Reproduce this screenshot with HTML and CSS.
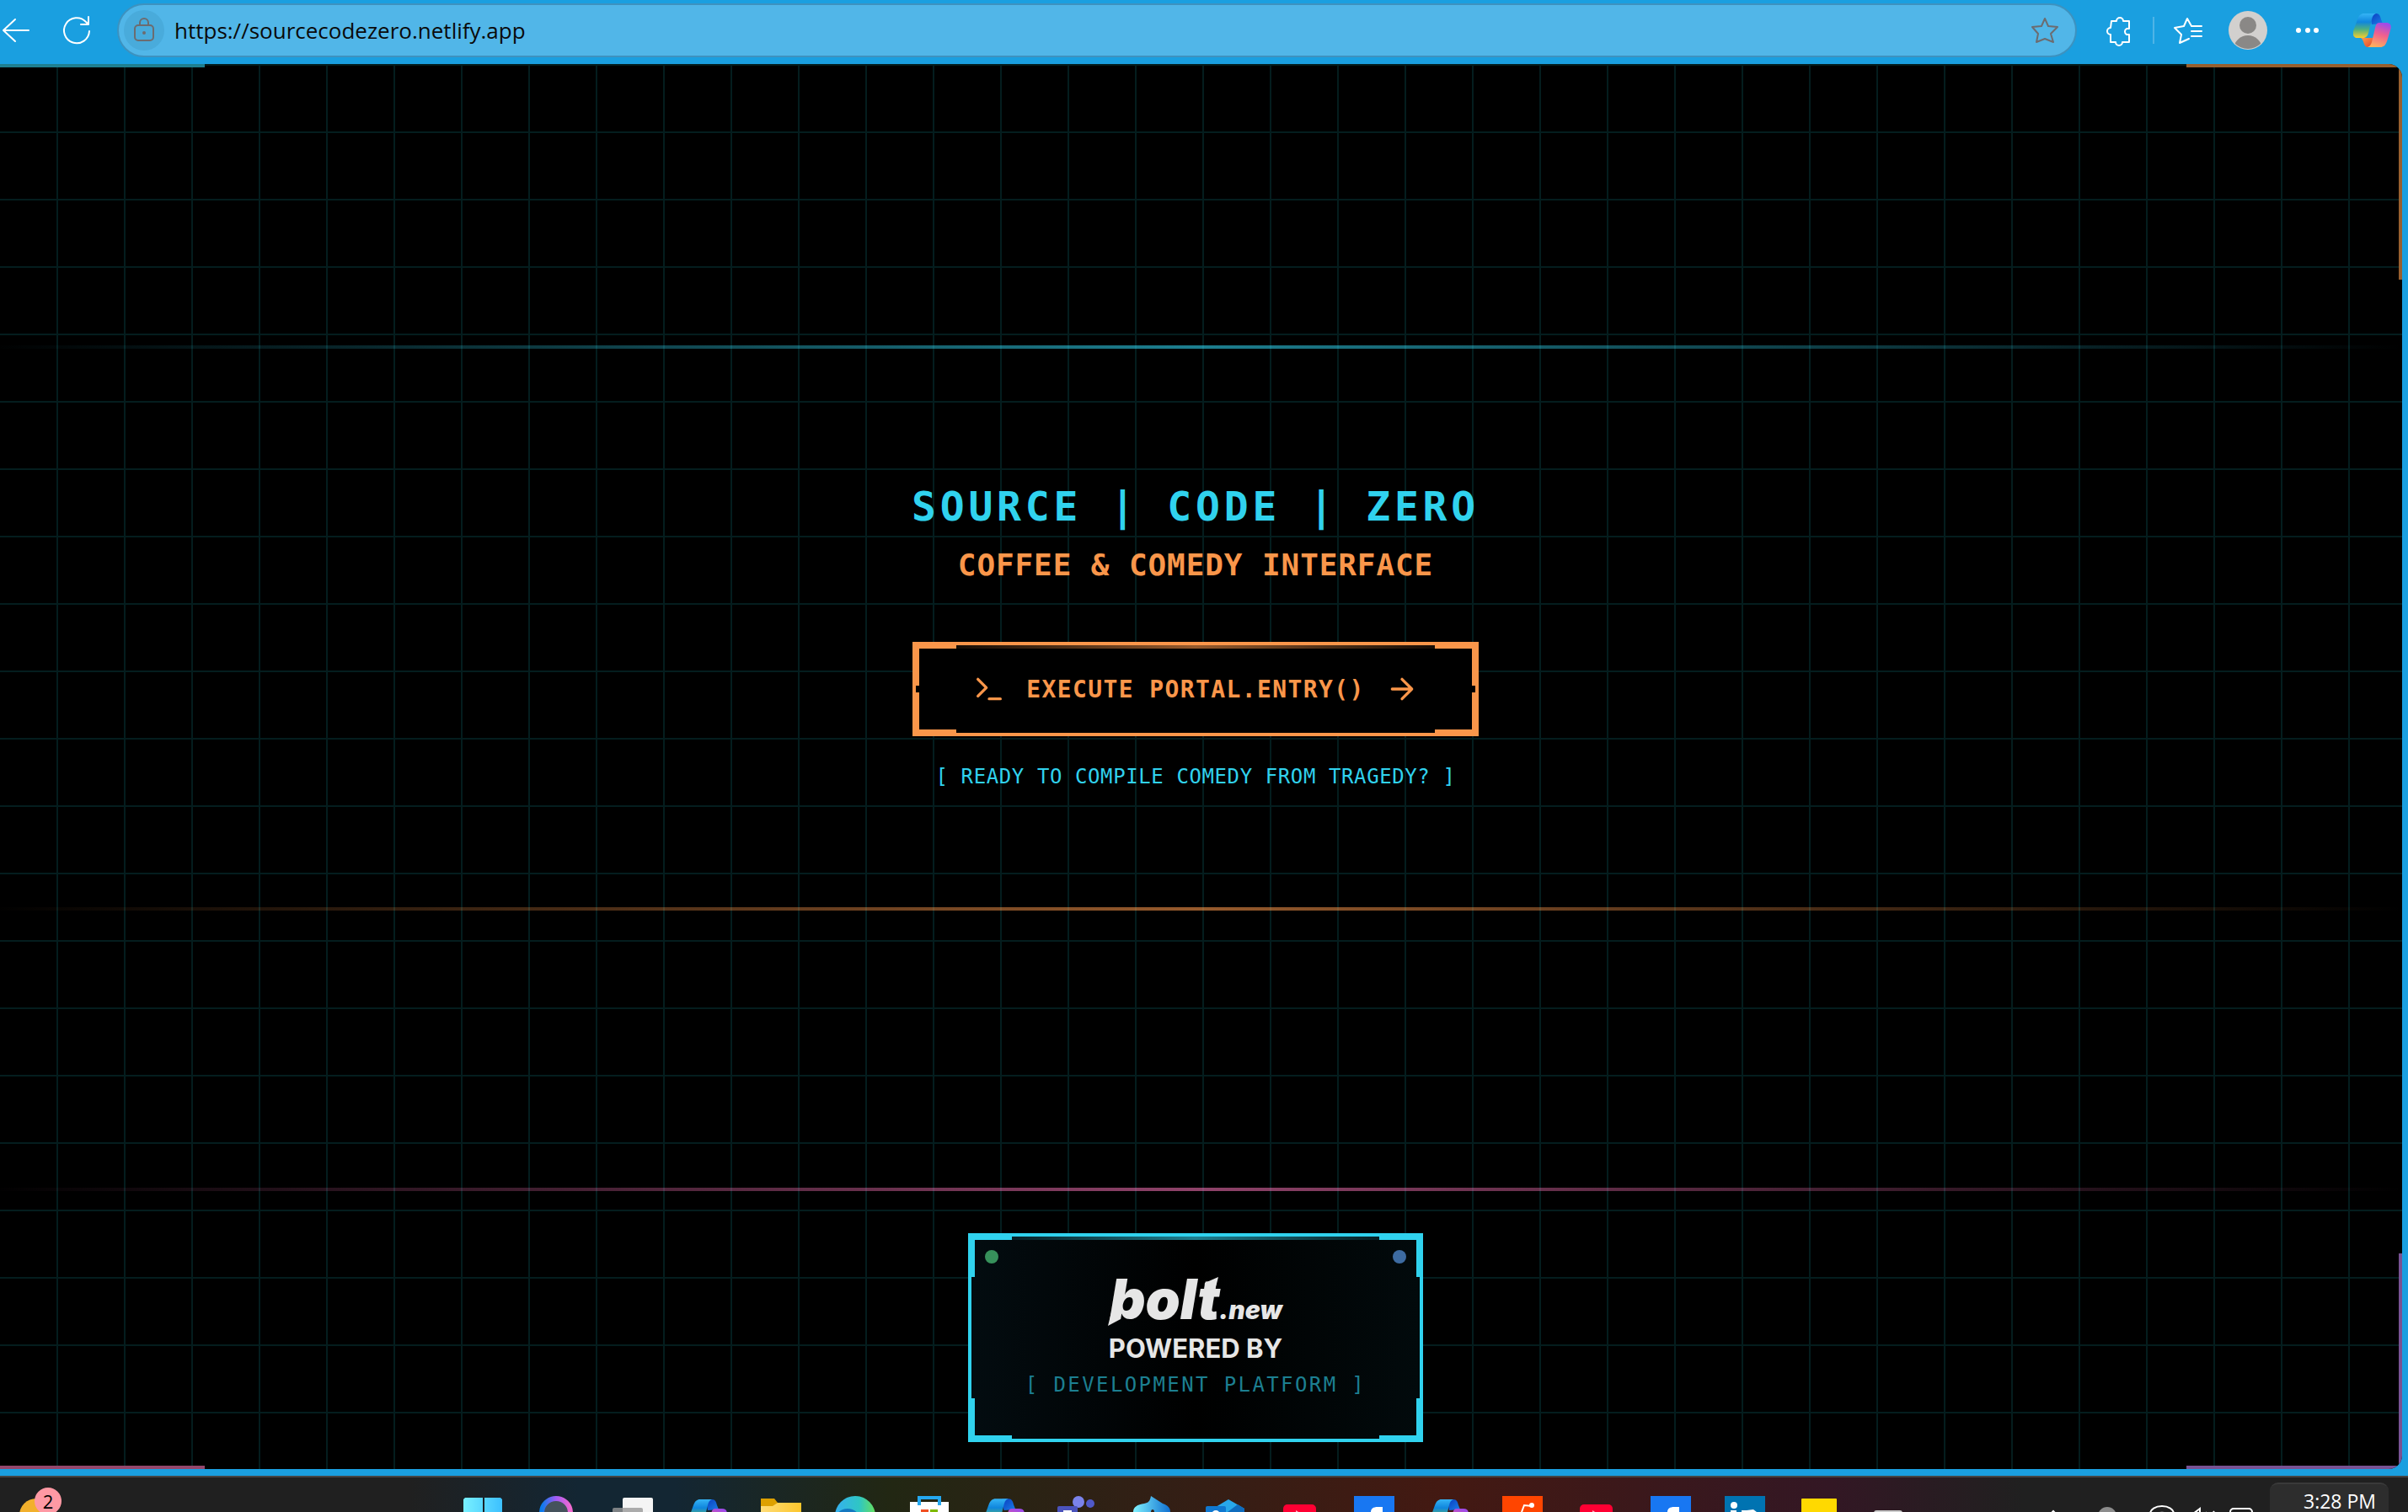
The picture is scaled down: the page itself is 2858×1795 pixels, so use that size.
FILE: index.html
```html
<!DOCTYPE html>
<html lang="en">
<head>
<meta charset="utf-8">
<title>Source Code Zero</title>
<link rel="stylesheet" href="styles.css">
</head>
<body>
<svg class="defs" aria-hidden="true">
  <defs>
    <linearGradient id="cp-left" x1="0" y1="0" x2="0" y2="1"><stop offset="0" stop-color="#35b4f5"/><stop offset=".35" stop-color="#0f86dd"/><stop offset=".65" stop-color="#4fb07f"/><stop offset="1" stop-color="#f8cf2c"/></linearGradient>
    <linearGradient id="cp-right" x1=".6" y1="0" x2=".3" y2="1"><stop offset="0" stop-color="#a04be8"/><stop offset=".45" stop-color="#f0608e"/><stop offset="1" stop-color="#ffb25c"/></linearGradient>
    <linearGradient id="cp-fold" x1="0" y1="0" x2="1" y2="1"><stop offset="0" stop-color="#0a3ec0"/><stop offset="1" stop-color="#1a7ee8"/></linearGradient>
    <linearGradient id="cp-foot" x1="0" y1="0" x2="1" y2="1"><stop offset="0" stop-color="#ff9a4a"/><stop offset="1" stop-color="#e0452f"/></linearGradient>
    <linearGradient id="win" x1="0" y1="0" x2="1" y2="0"><stop offset="0" stop-color="#78f0ff"/><stop offset="1" stop-color="#3cc0ff"/></linearGradient>
    <linearGradient id="ring" x1="0" y1="0" x2="1" y2="0"><stop offset="0" stop-color="#0a7bea"/><stop offset=".5" stop-color="#a25bf5"/><stop offset="1" stop-color="#f06ad0"/></linearGradient>
    <linearGradient id="folder" x1="0" y1="0" x2="1" y2="0"><stop offset="0" stop-color="#ffdc78"/><stop offset="1" stop-color="#fcc62c"/></linearGradient>
    <linearGradient id="edge" x1="0" y1="0" x2="1" y2="0"><stop offset="0" stop-color="#35b0f0"/><stop offset=".6" stop-color="#2fc6c4"/><stop offset="1" stop-color="#66e05e"/></linearGradient>
    <linearGradient id="hood" x1="0" y1="0" x2="1" y2="0"><stop offset="0" stop-color="#80f2ff"/><stop offset="1" stop-color="#0f6fd0"/></linearGradient>
    <symbol id="copilot" viewBox="0 0 45 40">
      <path d="M20 0h7c4 0 5 3 6 7l2 5-13 1z" fill="url(#cp-fold)"/>
      <path d="M10 29h14l-1 8c-1 2-3 3-6 3-5 0-4-9-8-11z" fill="url(#cp-foot)"/>
      <path d="M13 0h14c-3 1-4 3-5 7l-4 16c-1 4-3 6-7 6H5c-4 0-6-3-5-8L5 7c2-5 4-7 8-7z" fill="url(#cp-left)"/>
      <path d="M31 11h8c5 0 7 3 5 9l-4 13c-2 5-4 7-8 7H17c3-1 4-3 5-6l4-17c1-4 2-6 5-6z" fill="url(#cp-right)"/>
    </symbol>
    <symbol id="facebook" viewBox="0 0 88 41">
      <path d="M22 22h48v19H22z" fill="#1877f2"/><path d="M56 35v6H42c0-4 3-6 8-6z" fill="#fff"/>
    </symbol>
    <symbol id="youtube" viewBox="0 0 88 41">
      <rect x="26" y="32" width="39" height="20" rx="5" fill="#ff0033"/><path d="M41 39l8 5h-8z" fill="#fff" opacity=".7"/>
    </symbol>
  </defs>
</svg>

<header class="toolbar">
  <button class="tool" aria-label="Back"><svg width="40" height="40" viewBox="0 0 40 40"><path d="M18 7L4 20l14 13M4 20h30"/></svg></button>
  <button class="tool" aria-label="Refresh"><svg width="40" height="40" viewBox="0 0 40 40"><path d="M35 21a15 15 0 1 1-4-11l3 3M34 4v9h-9"/></svg></button>
  <div class="address">
    <span class="lock"><svg width="40" height="40" viewBox="0 0 40 40"><rect x="9" y="14" width="22" height="18" rx="4"/><path d="M15 14v-3a5 5 0 0 1 10 0v3"/><circle cx="20" cy="23" r="1"/></svg></span>
    <input class="url" type="text" value="https://sourcecodezero.netlify.app" aria-label="Address">
    <svg class="star" width="40" height="40" viewBox="0 0 40 40"><path d="M20 6l4 9 11 1-8 8 3 10-10-4-10 4 2-10-7-8 11-1z"/></svg>
  </div>
  <nav class="tools" aria-label="Browser tools">
    <button class="tool" aria-label="Extensions"><svg width="40" height="40" viewBox="0 0 40 40"><path d="M11 9h6a4 4 0 0 1 8 0h7v9h-3a4 4 0 0 0 0 7h3v9h-8a4 4 0 0 1-8 0h-6v-9a4 4 0 0 1 0-8z"/></svg></button>
    <span class="divider"></span>
    <button class="tool" aria-label="Favorites"><svg width="40" height="40" viewBox="0 0 40 40"><path d="M36 15H24l-5-9-4 9-11 2 8 8-2 10 11-5M24 21h12M24 27h12"/></svg></button>
    <button class="tool" aria-label="Profile"><svg width="46" height="46" viewBox="0 0 46 46"><clipPath id="face"><circle cx="23" cy="23" r="22"/></clipPath><circle class="disc" cx="23" cy="23" r="23"/><g class="person" clip-path="url(#face)"><circle cx="23" cy="17" r="10"/><ellipse cx="23" cy="46" rx="17" ry="17"/></g></svg></button>
    <button class="tool" aria-label="More"><svg class="dots" width="40" height="40" viewBox="0 0 40 40"><circle cx="9" cy="20" r="3"/><circle cx="20" cy="20" r="3"/><circle cx="30" cy="20" r="3"/></svg></button>
    <button class="tool assistant" aria-label="Copilot"><svg class="plain" width="45" height="40"><use href="#copilot"/></svg></button>
  </nav>
</header>

<div class="window">
  <main class="page">
    <i class="edge edge-tl"></i><i class="edge edge-tr"></i><i class="edge edge-bl"></i><i class="edge edge-br"></i>
    <i class="scan scan-cyan"></i><i class="scan scan-orange"></i><i class="scan scan-pink"></i>

    <section class="hero">
      <h1>SOURCE | CODE | ZERO</h1>
      <h2>COFFEE &amp; COMEDY INTERFACE</h2>
      <button class="frame portal">
        <i class="corner tl"></i><i class="corner tr"></i><i class="corner bl"></i><i class="corner br"></i>
        <svg width="40" height="40" viewBox="0 0 24 24"><path d="M4 17l6-6-6-6M12 19h8"/></svg>
        <span>EXECUTE PORTAL.ENTRY()</span>
        <svg width="40" height="40" viewBox="0 0 24 24"><path d="M5 12h14M12 5l7 7-7 7"/></svg>
      </button>
      <p class="ready">[ READY TO COMPILE COMEDY FROM TRAGEDY? ]</p>
    </section>

    <a class="frame badge" href="#">
      <i class="corner tl"></i><i class="corner tr"></i><i class="corner bl"></i><i class="corner br"></i>
      <i class="dot dot-green"></i><i class="dot dot-blue"></i>
      <svg class="bolt" width="208" height="60" viewBox="0 0 208 60" role="img" aria-label="bolt.new">
        <path d="M4 42L0 58l15-8v-8z"/><path d="M115 7l16-7-4 16h-13z"/>
        <text class="bolt-name" x="2" y="50">bolt</text><text class="bolt-new" x="132" y="50">.new</text>
      </svg>
      <span class="powered">POWERED BY</span>
      <span class="platform">[ DEVELOPMENT PLATFORM ]</span>
    </a>
  </main>
</div>

<footer class="taskbar">
  <div class="widgets">
    <svg width="88" height="41" viewBox="0 0 88 41"><circle cx="43" cy="45" r="20" fill="#f2b02c"/><circle cx="57" cy="28" r="16" fill="#ff99a4"/></svg>
    <span class="count">2</span>
  </div>
  <nav class="apps" aria-label="Apps">
    <svg viewBox="0 0 88 41"><path d="M23 24h21v17H21V26zM46 24h19l2 2v15H46z" fill="url(#win)"/></svg>
    <svg viewBox="0 0 88 41"><circle cx="43" cy="42" r="17" fill="#45525c" stroke="url(#ring)" stroke-width="6"/></svg>
    <svg viewBox="0 0 88 41"><rect x="34" y="24" width="36" height="30" rx="2" fill="#f4f4f4"/><rect x="22" y="36" width="36" height="20" rx="2" fill="#999" opacity=".8"/></svg>
    <svg viewBox="0 0 88 41"><use href="#copilot" x="25" y="26" width="45" height="40"/></svg>
    <svg viewBox="0 0 88 41"><path d="M22 25h16l4 5v11H22z" fill="#dda000"/><path d="M22 34h14l6-4h28v11H22z" fill="url(#folder)"/></svg>
    <svg viewBox="0 0 88 41"><circle cx="46" cy="46" r="24" fill="url(#edge)"/><circle cx="37" cy="53" r="16" fill="#1478c0"/></svg>
    <svg viewBox="0 0 88 41"><path d="M23 29h46v12H23z" fill="#fff"/><path d="M34 33v-9h24v9" fill="none" stroke="#25a8f0" stroke-width="4"/><path d="M36 38h9v3h-9z" fill="#f25022"/><path d="M47 38h9v3h-9z" fill="#7fba00"/></svg>
    <svg viewBox="0 0 88 41"><use href="#copilot" x="23" y="25" width="48" height="43"/></svg>
    <svg viewBox="0 0 88 41"><circle cx="47" cy="29" r="7" fill="#7b83eb"/><circle cx="61" cy="31" r="5" fill="#5059c9"/><rect x="22" y="34" width="24" height="20" rx="2" fill="#4b53bc"/><path d="M29 39h10v2H29z" fill="#fff"/></svg>
    <svg viewBox="0 0 88 41"><path d="M24 41c0-6 5-9 13-10 6-1 7-4 8-9l14 9c6 2 9 5 9 10H49c0-4-4-4-4 0z" fill="url(#hood)"/></svg>
    <svg viewBox="0 0 88 41"><path d="M34 35l15-9 19 11v4H34z" fill="#28a8ea"/><path d="M48 41l12-9 8 5v4z" fill="#0f6cbd"/><rect x="22" y="34" width="24" height="20" rx="2" fill="#1078d0"/><circle cx="34" cy="44" r="5" fill="#fff"/></svg>
    <svg viewBox="0 0 88 41"><use href="#youtube"/></svg>
    <svg viewBox="0 0 88 41"><use href="#facebook"/></svg>
    <svg viewBox="0 0 88 41"><use href="#copilot" x="25" y="26" width="45" height="40"/></svg>
    <svg viewBox="0 0 88 41"><path d="M22 22h48v19H22z" fill="#ff4500"/><path d="M45 41l3-8 10 1" fill="none" stroke="#fff" stroke-width="2"/><circle cx="57" cy="33" r="3" fill="#fff"/></svg>
    <svg viewBox="0 0 88 41"><use href="#youtube"/></svg>
    <svg viewBox="0 0 88 41"><use href="#facebook"/></svg>
    <svg viewBox="0 0 88 41"><path d="M22 22h48v19H22z" fill="#0073b1"/><circle cx="33" cy="33" r="4" fill="#fff"/><path d="M29 39h7v2h-7zM42 39h6l8-1 4 3H42z" fill="#fff"/></svg>
    <svg viewBox="0 0 88 41"><rect x="25" y="25" width="42" height="30" rx="1" fill="#ffd900"/></svg>
    <svg viewBox="0 0 88 41"><rect x="23" y="39" width="34" height="20" rx="3" fill="#ccc"/></svg>
  </nav>
  <div class="tray">
    <svg width="252" height="41" viewBox="0 0 252 41"><path class="line" d="M8 45l5-5 5 5"/><circle cx="77" cy="46" r="11" fill="#8c8c8c"/><path class="line" d="M128 43a14 9 0 0 1 28 0M137 43a6 3 0 0 1 10 0M175 43h4l8-6v9M194 41l2 4M203 40l3 5"/><rect class="line" x="223" y="37" width="26" height="20" rx="4"/><path class="line" d="M228 42h5"/></svg>
    <button class="clock">3:28 PM</button>
  </div>
</footer>
</body>
</html>
```
FILE: styles.css
```css
* { box-sizing: border-box; }

:root {
  --blue: #1a9fe0;
  --cyan: #30d2ee;
  --orange: #fa964a;
  --mono: "DejaVu Sans Mono", "Liberation Mono", monospace;
  --ui: "Open Sans", "Noto Sans", sans-serif;
}

body {
  margin: 0;
  height: 100vh;
  display: flex;
  flex-direction: column;
  overflow: hidden;
  background: var(--blue);
  font-family: var(--ui);
}

h1, h2, p { margin: 0; }
svg { display: block; flex: none; }
.defs { position: absolute; width: 0; height: 0; }

button {
  padding: 0;
  border: 0;
  background: none;
  color: inherit;
  font: inherit;
}

/* Browser toolbar */
.toolbar {
  flex: none;
  height: 76px;
  padding: 0 20px 4px 0;
  display: flex;
  align-items: center;
}

.tool svg {
  fill: none;
  stroke: #fff;
  stroke-width: 2;
  stroke-linecap: round;
  stroke-linejoin: round;
}
.toolbar > .tool { width: 40px; }
.toolbar > .tool + .tool { margin-left: 31px; }
.tool .disc { fill: #d2d0ce; stroke: none; }
.tool .person { fill: #8a8886; stroke: none; }
.tool .dots { fill: #fff; stroke: none; }
.tool .plain { stroke: none; }

.address {
  flex: 1;
  height: 64px;
  margin: 0 30px 0 28px;
  padding: 0 16px 0 6px;
  display: flex;
  align-items: center;
  border: 2px solid #3d92bf;
  border-radius: 32px;
  background: #51b6e8;
}
.lock {
  width: 48px;
  height: 48px;
  display: grid;
  place-items: center;
  border-radius: 50%;
  background: #49abdb;
}
.lock svg, .star {
  fill: none;
  stroke: #6c6c70;
  stroke-width: 2;
  stroke-linejoin: round;
}
.url {
  flex: 1;
  min-width: 0;
  margin-left: 12px;
  padding: 0;
  border: 0;
  background: none;
  color: #0a0a0a;
  font: 26px/40px var(--ui);
}

.tools { display: flex; align-items: center; }
.divider { width: 2px; height: 32px; margin: 0 20px; background: #4fb4e6; }
.tools .tool + .tool { margin-left: 28px; }
.tools .assistant.tool { margin-left: 34px; }

/* Web page */
.window {
  flex: 1;
  min-height: 0;
  padding: 0 7px 8px 0;
  display: flex;
}
.page {
  flex: 1;
  position: relative;
  margin-left: -13px;
  padding-bottom: 32px;
  display: flex;
  flex-direction: column;
  align-items: center;
  overflow: hidden;
  border-radius: 0 16px 16px 0;
  background-color: #000;
  background-image:
    linear-gradient(#041d1e 2px, transparent 2px),
    linear-gradient(90deg, #041d1e 2px, transparent 2px);
  background-size: 80px 80px;
}

.edge { position: absolute; width: 256px; height: 256px; border: 0 solid; }
.edge-tl { top: 0; left: 0; border-color: #1e7f90; border-top-width: 4px; }
.edge-tr { top: 0; right: 0; border-color: #975f2f; border-width: 4px 4px 0 0; }
.edge-bl { bottom: 0; left: 0; border-color: #94476c; border-bottom-width: 4px; }
.edge-br { bottom: 0; right: 0; border-color: #785293; border-width: 0 4px 4px 0; }

.scan { position: absolute; left: 0; right: 0; height: 4px; opacity: .6; }
.scan-cyan { top: 20%; background: linear-gradient(90deg, transparent, var(--cyan), transparent); }
.scan-orange { top: 60%; background: linear-gradient(90deg, transparent, var(--orange), transparent); }
.scan-pink { top: 80%; background: linear-gradient(90deg, transparent, #ee6fb0, transparent); }

.hero {
  flex: 1;
  display: flex;
  flex-direction: column;
  align-items: center;
  justify-content: center;
  padding-bottom: 27px;
  font-family: var(--mono);
  text-align: center;
  white-space: nowrap;
}
h1 { color: var(--cyan); font-size: 48px; line-height: 60px; letter-spacing: .1em; }
h2 { margin-top: 20px; color: var(--orange); font-size: 36px; line-height: 40px; letter-spacing: .025em; }
.ready { margin-top: 28px; color: var(--cyan); font-size: 24px; line-height: 40px; letter-spacing: .025em; }

/* Framed box with thick corners and a glowing top edge */
.frame { position: relative; display: flex; border: 4px solid var(--frame); }
.frame::before {
  content: "";
  position: absolute;
  top: 0;
  left: 0;
  right: 0;
  height: 4px;
  background: linear-gradient(90deg, transparent, var(--frame), transparent);
  opacity: .6;
}
.corner { position: absolute; width: 48px; height: 48px; border: 0 solid var(--frame); }
.tl { top: 0; left: 0; border-width: 4px 0 0 4px; }
.tr { top: 0; right: 0; border-width: 4px 4px 0 0; }
.bl { bottom: 0; left: 0; border-width: 0 0 4px 4px; }
.br { bottom: 0; right: 0; border-width: 0 4px 4px 0; }

.portal {
  --frame: var(--orange);
  width: 672px;
  height: 112px;
  margin-top: 71px;
  align-items: center;
  justify-content: center;
  gap: 24px;
  background: #000;
  color: var(--orange);
  font-size: 28px;
  font-weight: 700;
  letter-spacing: .05em;
}
.portal svg {
  fill: none;
  stroke: currentColor;
  stroke-width: 2;
  stroke-linecap: round;
  stroke-linejoin: round;
}

.badge {
  --frame: var(--cyan);
  width: 540px;
  height: 248px;
  padding-top: 48px;
  flex-direction: column;
  align-items: center;
  background: linear-gradient(90deg, #030c10, #000 50%, #020a0c);
  text-decoration: none;
  white-space: nowrap;
}
.dot { position: absolute; top: 16px; width: 16px; height: 16px; border-radius: 50%; }
.dot-green { left: 16px; background: #37915b; }
.dot-blue { right: 16px; background: #3d6ba1; }
.bolt { fill: #e6e6e6; overflow: visible; }
.bolt text { font-family: Inter, sans-serif; font-weight: 900; font-style: italic; }
.bolt-name { font-size: 66px; }
.bolt-new { font-size: 30px; }
.powered { margin-top: 5px; color: #e6e6e6; font: 700 31px/40px Inter, sans-serif; }
.platform { margin-top: 3px; color: #1c7f91; font: 24px/40px var(--mono); letter-spacing: .1em; }

/* Desktop taskbar */
.taskbar {
  flex: none;
  height: 43px;
  display: grid;
  grid-template-columns: 529px 1fr auto;
  overflow: hidden;
  border-top: 2px solid #444;
  background: linear-gradient(90deg, #202020 17%, #132633 24%, #132633 28%, #222713 37%, #321f15 48%, #431912 60%, #331724 76%, #202020 84%);
}
.widgets { display: grid; }
.widgets > * { grid-area: 1 / 1; }
.count { z-index: 1; width: 32px; margin-left: 41px; padding-top: 16px; font-size: 22px; line-height: 24px; text-align: center; }
.apps { display: flex; }
.apps > svg { width: 88px; height: 41px; }
.tray { display: flex; gap: 18px; padding-right: 23px; }
.line { fill: none; stroke: #fff; stroke-width: 2; }
.clock {
  width: 141px;
  height: 35px;
  margin-top: 6px;
  padding: 6px 15px 0 0;
  border-top: 2px solid #3a3a3a;
  border-radius: 10px 10px 0 0;
  background: #2d2d2d;
  color: #fff;
  font-size: 23px;
  line-height: 26px;
  text-align: right;
}
```
